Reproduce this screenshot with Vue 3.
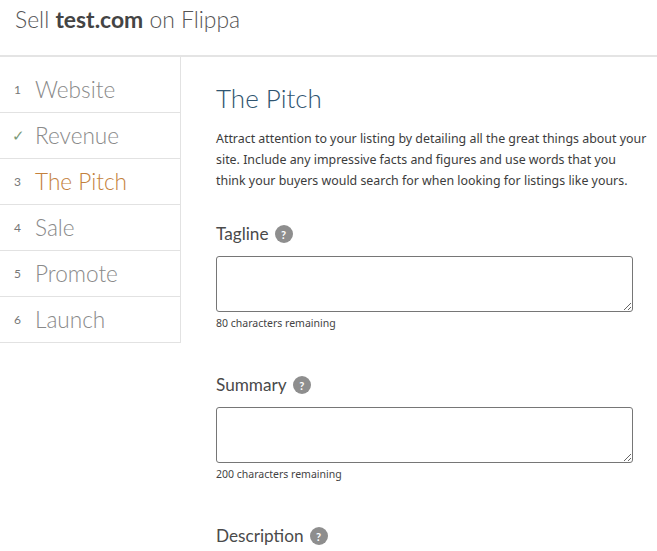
<script setup>
const steps = [
  { num: '1', label: 'Website' },
  { num: '✓', label: 'Revenue', done: true },
  { num: '3', label: 'The Pitch', active: true },
  { num: '4', label: 'Sale' },
  { num: '5', label: 'Promote' },
  { num: '6', label: 'Launch' }
]

const fields = [
  { label: 'Tagline', remaining: '80 characters remaining' },
  { label: 'Summary', remaining: '200 characters remaining' }
]
</script>

<template>
  <div class="page">
    <header class="top">
      <h1>Sell <strong>test.com</strong> on Flippa</h1>
    </header>
    <div class="body">
      <ul class="steps">
        <li v-for="step in steps" :key="step.label" :class="{ active: step.active }">
          <span class="num" :class="{ done: step.done }">{{ step.num }}</span>
          <span class="name">{{ step.label }}</span>
        </li>
      </ul>
      <main class="content">
        <h2>The Pitch</h2>
        <p class="intro">
          Attract attention to your listing by detailing all the great things about your<br>
          site. Include any impressive facts and figures and use words that you<br>
          think your buyers would search for when looking for listings like yours.
        </p>
        <div v-for="field in fields" :key="field.label" class="field">
          <label>{{ field.label }} <span class="help">?</span></label>
          <textarea></textarea>
          <small>{{ field.remaining }}</small>
        </div>
        <div class="field">
          <label>Description <span class="help">?</span></label>
        </div>
      </main>
    </div>
  </div>
</template>

<style>
html, body {
  margin: 0;
  background: #fff;
  overflow: hidden;
}
</style>

<style scoped>
.page {
  width: 657px;
  height: 551px;
  overflow: hidden;
  font-family: "Lato", "Open Sans", sans-serif;
  color: #444;
}

.top {
  height: 55px;
  border-bottom: 2px solid #e4e4e4;
}

.top h1 {
  margin: 0;
  padding: 4px 0 0 15px;
  font-size: 22.9px;
  line-height: 30px;
  font-weight: 300;
  color: #555;
}

.top strong {
  font-weight: 700;
  color: #444;
}

.body {
  display: flex;
  align-items: flex-start;
}

.steps {
  width: 180px;
  margin: 0;
  padding: 10px 0 0;
  list-style: none;
  border-right: 1px solid #e2e2e2;
  border-bottom: 1px solid #e2e2e2;
  flex: none;
}

.steps li {
  height: 45px;
  display: flex;
  align-items: center;
  border-bottom: 1px solid #e2e2e2;
}

.steps li:last-child {
  border-bottom: none;
}

.num {
  width: 35px;
  padding-left: 14px;
  box-sizing: border-box;
  font-size: 12px;
  color: #777;
  flex: none;
}

.num.done {
  color: #7a9a7a;
  font-size: 15px;
  padding-left: 12px;
}

.name {
  font-size: 22.6px;
  font-weight: 300;
  color: #8a8a8a;
  margin-top: -1px;
}

.active .name {
  color: #c4813c;
}

.content {
  flex: 1;
  padding: 24px 0 0 35px;
  min-width: 0;
}

h2 {
  margin: 0;
  font-size: 26px;
  line-height: 34px;
  font-weight: 300;
  color: #2f5470;
}

.intro {
  margin: 13px 0 0;
  font-family: "Noto Sans", sans-serif;
  font-size: 12.4px;
  line-height: 21px;
  color: #3c3c3c;
  white-space: nowrap;
}

.field {
  margin-top: 30px;
  padding-bottom: 21px;
}

.field + .field {
  margin-top: 21px;
}

label {
  display: flex;
  align-items: center;
  gap: 6px;
  height: 24px;
  font-size: 17.2px;
  color: #4a4a4a;
}

.help {
  width: 18px;
  height: 18px;
  border-radius: 50%;
  background: #8e8e8e;
  color: #fff;
  font-size: 11px;
  font-weight: 700;
  display: flex;
  align-items: center;
  justify-content: center;
  margin-top: 2px;
}

textarea {
  display: block;
  width: 417px;
  height: 56px;
  box-sizing: border-box;
  margin: 11px 0 0;
  border: 1px solid #767676;
  border-radius: 3px;
  background: #fff;
}

small {
  display: block;
  margin-top: 4px;
  font-family: "Noto Sans", sans-serif;
  font-size: 10.5px;
  line-height: 14px;
  color: #444;
}
</style>
